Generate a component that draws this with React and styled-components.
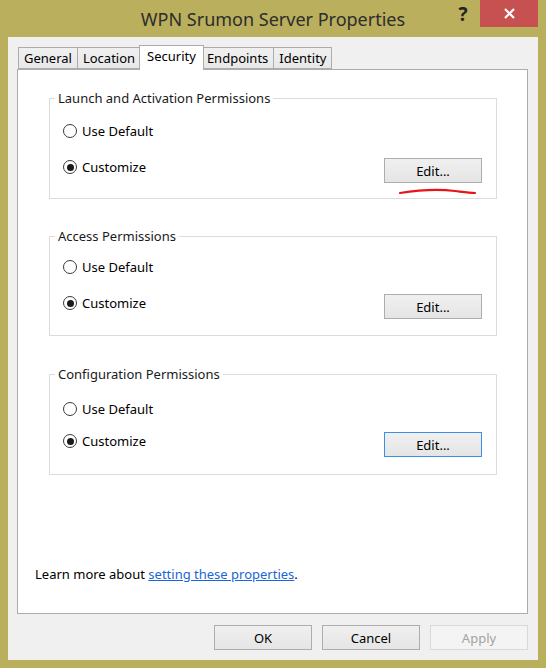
import React from 'react';
import styled, { createGlobalStyle } from 'styled-components';

const GlobalStyle = createGlobalStyle`
  body {
    margin: 0;
    font-family: "Noto Sans", "Open Sans", sans-serif;
  }
`;

const Window = styled.div`
  width: 546px;
  height: 668px;
  background-color: #b9af5c;
  display: flex;
  flex-direction: column;
  box-sizing: border-box;
`;

const TitleBar = styled.div`
  height: 37px;
  flex: none;
  display: grid;
  grid-template-columns: 1fr auto 1fr;
  align-items: start;
`;

const Title = styled.div`
  grid-column: 2;
  font-size: 18px;
  line-height: 39px;
  color: #2d2d2d;
`;

const Controls = styled.div`
  justify-self: end;
  display: flex;
  align-items: flex-start;
  margin-right: 8px;
`;

const HelpButton = styled.div`
  width: 26px;
  height: 27px;
  margin-right: 4px;
  font-size: 19px;
  font-weight: 700;
  line-height: 28px;
  text-align: center;
  color: #222;
`;

const CloseButton = styled.div`
  width: 58px;
  height: 27px;
  background-color: #c75050;
  display: flex;
  align-items: center;
  justify-content: center;
`;

const Client = styled.div`
  flex: 1;
  margin: 0 8px 8px;
  background-color: #f0f0f0;
  padding: 9px 10px 0 9px;
  display: flex;
  flex-direction: column;
`;

const TabStrip = styled.div`
  display: flex;
  align-items: flex-end;
  height: 24px;
  padding-left: 2px;
  position: relative;
  z-index: 1;
  margin-bottom: -1px;
`;

const Tab = styled.div`
  box-sizing: border-box;
  height: ${({ $active }) => ($active ? '25px' : '22px')};
  margin: ${({ $active }) => ($active ? '0 -2px 0 -2px' : '0 0 1px -1px')};
  padding: 0 ${({ $active }) => ($active ? '7px' : '5px')};
  border: 1px solid #acacac;
  border-bottom: ${({ $active }) => ($active ? 'none' : '1px solid #acacac')};
  background: ${({ $active }) => ($active ? '#ffffff' : 'linear-gradient(#f0f0f0, #e8e8e8)')};
  font-size: 13px;
  line-height: 21px;
  color: #000;
  position: relative;
  z-index: ${({ $active }) => ($active ? 2 : 0)};
`;

const Panel = styled.div`
  flex: none;
  box-sizing: border-box;
  height: 545px;
  background-color: #ffffff;
  border: 1px solid #acacac;
  padding: 19px 30px 30px 31px;
  display: flex;
  flex-direction: column;
`;

const Group = styled.fieldset`
  margin: ${({ $mt }) => $mt}px 0 0;
  padding: ${({ $pt }) => $pt}px 14px ${({ $pb }) => $pb}px 13px;
  border: 1px solid #dcdcdc;
  display: flex;
  flex-direction: column;
  gap: ${({ $gap }) => $gap}px;
  min-width: 0;
`;

const Legend = styled.legend`
  font-size: 13px;
  line-height: 18px;
  padding: 0 3px;
  margin-left: -8px;
  color: #1a1a1a;
`;

const Row = styled.div`
  display: flex;
  align-items: flex-start;
`;

const Radio = styled.label`
  display: flex;
  align-items: center;
  gap: 5px;
  font-size: 13px;
  line-height: 18px;
  color: #000;
`;

const Circle = styled.span`
  box-sizing: border-box;
  width: 14px;
  height: 14px;
  border-radius: 50%;
  border: 1px solid #3a3a3a;
  background: #fff;
  display: flex;
  align-items: center;
  justify-content: center;

  &::after {
    content: '';
    width: 7px;
    height: 7px;
    border-radius: 50%;
    background: #1a1a1a;
    display: ${({ $checked }) => ($checked ? 'block' : 'none')};
  }
`;

const EditWrap = styled.div`
  margin-left: auto;
  position: relative;
`;

const Button = styled.button`
  box-sizing: border-box;
  width: 98px;
  height: 25px;
  padding: 0;
  border: 1px solid ${({ $focused, disabled }) => ($focused ? '#3c8fe6' : disabled ? '#d9d9d9' : '#adadad')};
  background: ${({ disabled }) => (disabled ? '#f4f4f4' : 'linear-gradient(#f0f0f0, #e5e5e5)')};
  font-family: inherit;
  font-size: 13px;
  color: ${({ disabled }) => (disabled ? '#a3a3a3' : '#000')};
`;

const Underline = styled.svg`
  position: absolute;
  left: 15px;
  top: 30px;
`;

const LearnMore = styled.div`
  margin-top: auto;
  margin-left: -14px;
  font-size: 13px;
  line-height: 18px;
  color: #000;
`;

const Link = styled.a`
  color: #1a66d6;
  text-decoration: underline;
`;

const Footer = styled.div`
  display: flex;
  justify-content: flex-end;
  gap: 10px;
  padding-top: 11px;
`;

const groups = [
  { title: 'Launch and Activation Permissions', mt: 0, pt: 15, gap: 18, pb: 15, mark: true },
  { title: 'Access Permissions', mt: 28, pt: 13, gap: 18, pb: 16 },
  { title: 'Configuration Permissions', mt: 29, pt: 17, gap: 14, pb: 17, focused: true },
];

const tabs = ['General', 'Location', 'Security', 'Endpoints', 'Identity'];

const PermissionGroup = ({ g }) => (
  <Group $mt={g.mt} $pt={g.pt} $pb={g.pb} $gap={g.gap}>
    <Legend>{g.title}</Legend>
    <Row>
      <Radio><Circle />Use Default</Radio>
    </Row>
    <Row>
      <Radio><Circle $checked />Customize</Radio>
      <EditWrap>
        <Button $focused={g.focused}>Edit...</Button>
        {g.mark && (
          <Underline width="78" height="8" viewBox="0 0 78 8">
            <path d="M1 5 C 20 2, 40 1, 56 3 C 64 4, 70 5, 76 5" fill="none" stroke="#e8141a" strokeWidth="2.2" strokeLinecap="round" />
          </Underline>
        )}
      </EditWrap>
    </Row>
  </Group>
);

export default function App() {
  return (
    <>
      <GlobalStyle />
      <Window>
        <TitleBar>
          <Title>WPN Srumon Server Properties</Title>
          <Controls>
            <HelpButton>?</HelpButton>
            <CloseButton>
              <svg width="11" height="11" viewBox="0 0 11 11">
                <path d="M1 1 L10 10 M10 1 L1 10" stroke="#fff" strokeWidth="2.2" />
              </svg>
            </CloseButton>
          </Controls>
        </TitleBar>
        <Client>
          <TabStrip>
            {tabs.map((t) => (
              <Tab key={t} $active={t === 'Security'}>{t}</Tab>
            ))}
          </TabStrip>
          <Panel>
            {groups.map((g) => (
              <PermissionGroup key={g.title} g={g} />
            ))}
            <LearnMore>
              Learn more about <Link href="#">setting these properties</Link>.
            </LearnMore>
          </Panel>
          <Footer>
            <Button>OK</Button>
            <Button>Cancel</Button>
            <Button disabled>Apply</Button>
          </Footer>
        </Client>
      </Window>
    </>
  );
}
